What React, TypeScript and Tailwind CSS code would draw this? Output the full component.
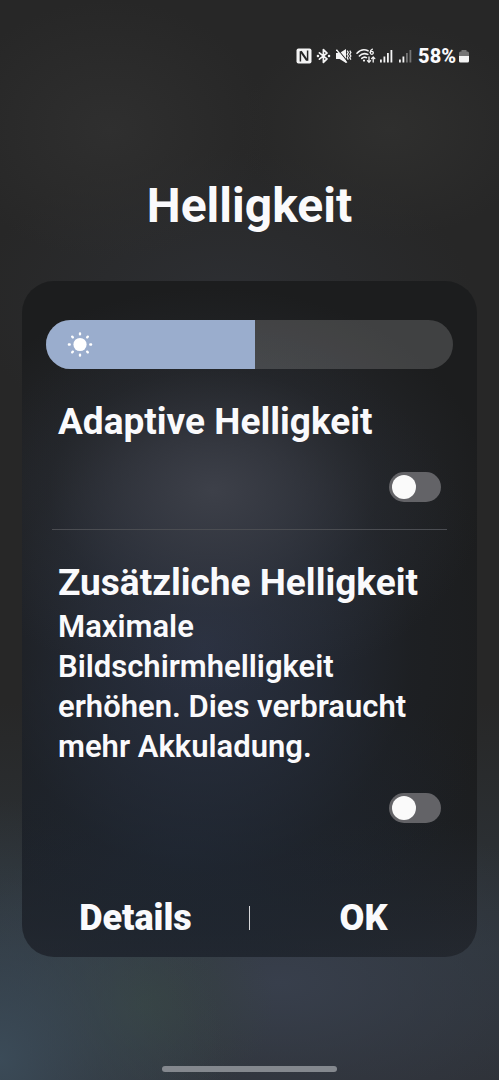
import { useState } from 'react'

interface SwitchRowProps {
    id: string
    title: string
    description?: string
}

function StatusBar() {
    return (
        <div className="flex h-6 items-center justify-end gap-1 pr-[29px]">
            <svg className="h-4 w-4" viewBox="0 0 16 16" fill="none">
                <rect x="0.5" y="0.5" width="15" height="15" rx="2" fill="#f4f4f4" />
                <path d="M4.4 13.4V3.2M11.6 2.6v10.2" stroke="#262626" strokeWidth="1.5" />
                <path d="M4.8 3.4l6.2 9" stroke="#262626" strokeWidth="2" />
            </svg>
            <svg className="h-4 w-4" viewBox="0 0 16 16" fill="none" stroke="#f4f4f4" strokeWidth="1.7" strokeLinejoin="round" strokeLinecap="round">
                <path d="M3.4 4.8l7.6 6-3.6 3.6V1.6L11 5.2l-7.6 6" />
                <path d="M1.9 8h.1M13 8h.1" strokeWidth="2.4" />
            </svg>
            <svg className="h-4 w-4" viewBox="0 0 16 16" fill="none">
                <path d="M0 5h3.6L10 1v14l-6.4-4H0z" fill="#f4f4f4" />
                <path d="M1.4 1l10 12.4" stroke="#262626" strokeWidth="1.1" />
                <path d="M.4 1.6l10.4 13" stroke="#f4f4f4" strokeWidth="1.5" />
                <path d="M11.2 2.6l1.1 1.8-1.1 1.8 1.1 1.8-1.1 1.8 1.1 1.8M13.8 2.6l1.1 1.8-1.1 1.8 1.1 1.8-1.1 1.8 1.1 1.8" stroke="#f4f4f4" strokeWidth="1.2" />
            </svg>
            <svg className="h-4 w-5" viewBox="0 0 20 16" fill="none" stroke="#f4f4f4" strokeWidth="1.6" strokeLinecap="round">
                <path d="M1 5.2C4.2 1.8 8.6 1.2 12 2.8M3.4 8c2.2-2.4 5.4-3 8.4-1.6M5.8 10.4c1.4-1.4 3.2-1.6 4.6-.8" />
                <circle cx="8" cy="12.6" r="1.1" fill="#f4f4f4" stroke="none" />
                <path d="M16.4 1.2c-1.6.6-2.2 1.8-2.2 3.2" strokeWidth="1.3" />
                <circle cx="15.8" cy="4.8" r="1.5" strokeWidth="1.3" />
                <path d="M13 9v5M11.4 12.6L13 14.3l1.6-1.7M17.2 14V9M15.6 10.6l1.6-1.7 1.6 1.7" strokeWidth="1.3" />
            </svg>
            <svg className="h-4 w-3.5" viewBox="0 0 14 16" fill="#f4f4f4">
                <rect x="0" y="11.5" width="1.8" height="3" />
                <rect x="3.5" y="8.5" width="1.8" height="6" />
                <rect x="7" y="5" width="1.8" height="9.5" />
                <rect x="10.5" y="2" width="1.8" height="12.5" />
            </svg>
            <svg className="h-4 w-3.5" viewBox="0 0 14 16" fill="#f4f4f4">
                <rect x="1" y="11.5" width="1.8" height="3" />
                <rect x="4.5" y="8.5" width="1.8" height="6" />
                <rect x="8" y="5" width="1.8" height="9.5" fill="#757575" />
                <rect x="11.5" y="2" width="1.8" height="12.5" fill="#757575" />
            </svg>
            <span className="ml-0.5 flex items-center gap-0.5">
                <span className="text-[20px] font-extrabold leading-6">58%</span>
                <svg className="h-4 w-3" viewBox="0 0 12 16">
                    <path d="M3.5 2h5v1.5h1A1.5 1.5 0 0 1 11 5v3H1V5a1.5 1.5 0 0 1 1.5-1.5h1z" fill="#757575" />
                    <path d="M1 8h10v5a1.5 1.5 0 0 1-1.5 1.5h-7A1.5 1.5 0 0 1 1 13z" fill="#f4f4f4" />
                </svg>
            </span>
        </div>
    )
}

function BrightnessSlider() {
    const [value, setValue] = useState(51.4)

    return (
        <div className="relative h-[49px] overflow-hidden rounded-full bg-white/16">
            <div className="h-full bg-[#9aadcd]" style={{ width: `${value}%` }} />
            <svg className="absolute left-[21px] top-3 h-[26px] w-[26px]" viewBox="0 0 26 26" fill="#fff" stroke="#fff" strokeWidth="2.4" strokeLinecap="round">
                <circle cx="13" cy="12.5" r="6.6" stroke="none" />
                <path d="M13 1.4v.8M13 22.8v.8M1.9 12.5h.8M23.3 12.5h.8M5.2 4.7l.6.6M20.2 19.7l.6.6M5.2 20.3l.6-.6M20.2 5.3l.6-.6" />
            </svg>
            <input
                type="range"
                aria-label="Helligkeit"
                step="0.1"
                value={value}
                onChange={(e) => setValue(Number(e.target.value))}
                className="absolute inset-0 h-full w-full cursor-pointer opacity-0"
            />
        </div>
    )
}

function SwitchRow({ id, title, description }: SwitchRowProps) {
    return (
        <div className="flex flex-col px-9">
            <label htmlFor={id} className="text-[37px] font-bold leading-12">
                {title}
            </label>
            {description && (
                <p id={`${id}-text`} className="text-[31px] font-semibold leading-10">
                    {description}
                </p>
            )}
            <input
                id={id}
                type="checkbox"
                role="switch"
                aria-describedby={description ? `${id}-text` : undefined}
                className="mt-[26px] flex h-[30px] w-[52px] cursor-pointer appearance-none items-center self-end rounded-full bg-[#636367] px-[3px] before:h-6 before:w-6 before:rounded-full before:bg-[#fafafa] before:content-[''] checked:justify-end checked:bg-[#9aadcd]"
            />
        </div>
    )
}

export default function App() {
    return (
        <div className="flex min-h-screen flex-col bg-[#272727] bg-[radial-gradient(ellipse_32%_12%_at_22%_12%,#2f2f2f,transparent),radial-gradient(ellipse_30%_10%_at_78%_12%,#2f2f2e,transparent),radial-gradient(ellipse_50%_14%_at_45%_28%,#2d2f33,transparent),radial-gradient(ellipse_45%_24%_at_0%_98%,#3b4b58,#3b4b5870_45%,transparent),radial-gradient(ellipse_26%_10%_at_29%_93%,#364240,#36424070_45%,transparent),radial-gradient(ellipse_70%_16%_at_56%_91%,#383f4c,#383f4c80_45%,transparent),linear-gradient(to_bottom,transparent_65%,#2e353b_88%,#2d3036)] pt-11 font-['Roboto','Noto_Sans',sans-serif] text-[#fafafc]">
            <StatusBar />

            <h1 className="mt-[108px] text-center text-[48px] font-bold leading-[60px]">
                Helligkeit
            </h1>

            <main className="mx-[22px] mt-[45px] rounded-[32px] bg-[#1c1d1e] bg-[radial-gradient(ellipse_60%_30%_at_42%_31%,#3d4049,#3a3d46b0_30%,#33374050_60%,transparent),radial-gradient(ellipse_65%_48%_at_40%_54%,#2a3142,#262d3bb0_40%,#20252e50_70%,transparent),radial-gradient(ellipse_75%_32%_at_35%_85%,#1e2631,#1e263180_50%,transparent),linear-gradient(to_bottom,transparent_80%,#24282f)] pt-[39px]">
                <div className="mx-6 mb-[29px]">
                    <BrightnessSlider />
                </div>

                <SwitchRow id="adaptive" title="Adaptive Helligkeit" />
                <hr className="mx-[30px] mb-[29px] mt-[27px] border-[#4b4d52]" />
                <SwitchRow
                    id="extra"
                    title="Zusätzliche Helligkeit"
                    description="Maximale Bildschirmhelligkeit erhöhen. Dies verbraucht mehr Akkuladung."
                />

                <div className="flex items-center pb-3.5 pt-[70px] text-[36px] font-black leading-[50px]">
                    <button className="flex-1 cursor-pointer">Details</button>
                    <span className="h-6 w-px bg-[#d8d8da]" />
                    <button className="flex-1 cursor-pointer">OK</button>
                </div>
            </main>

            <div className="mx-auto mb-2 mt-auto h-1.5 w-[35%] rounded-full bg-[#84888e]" />
        </div>
    )
}
